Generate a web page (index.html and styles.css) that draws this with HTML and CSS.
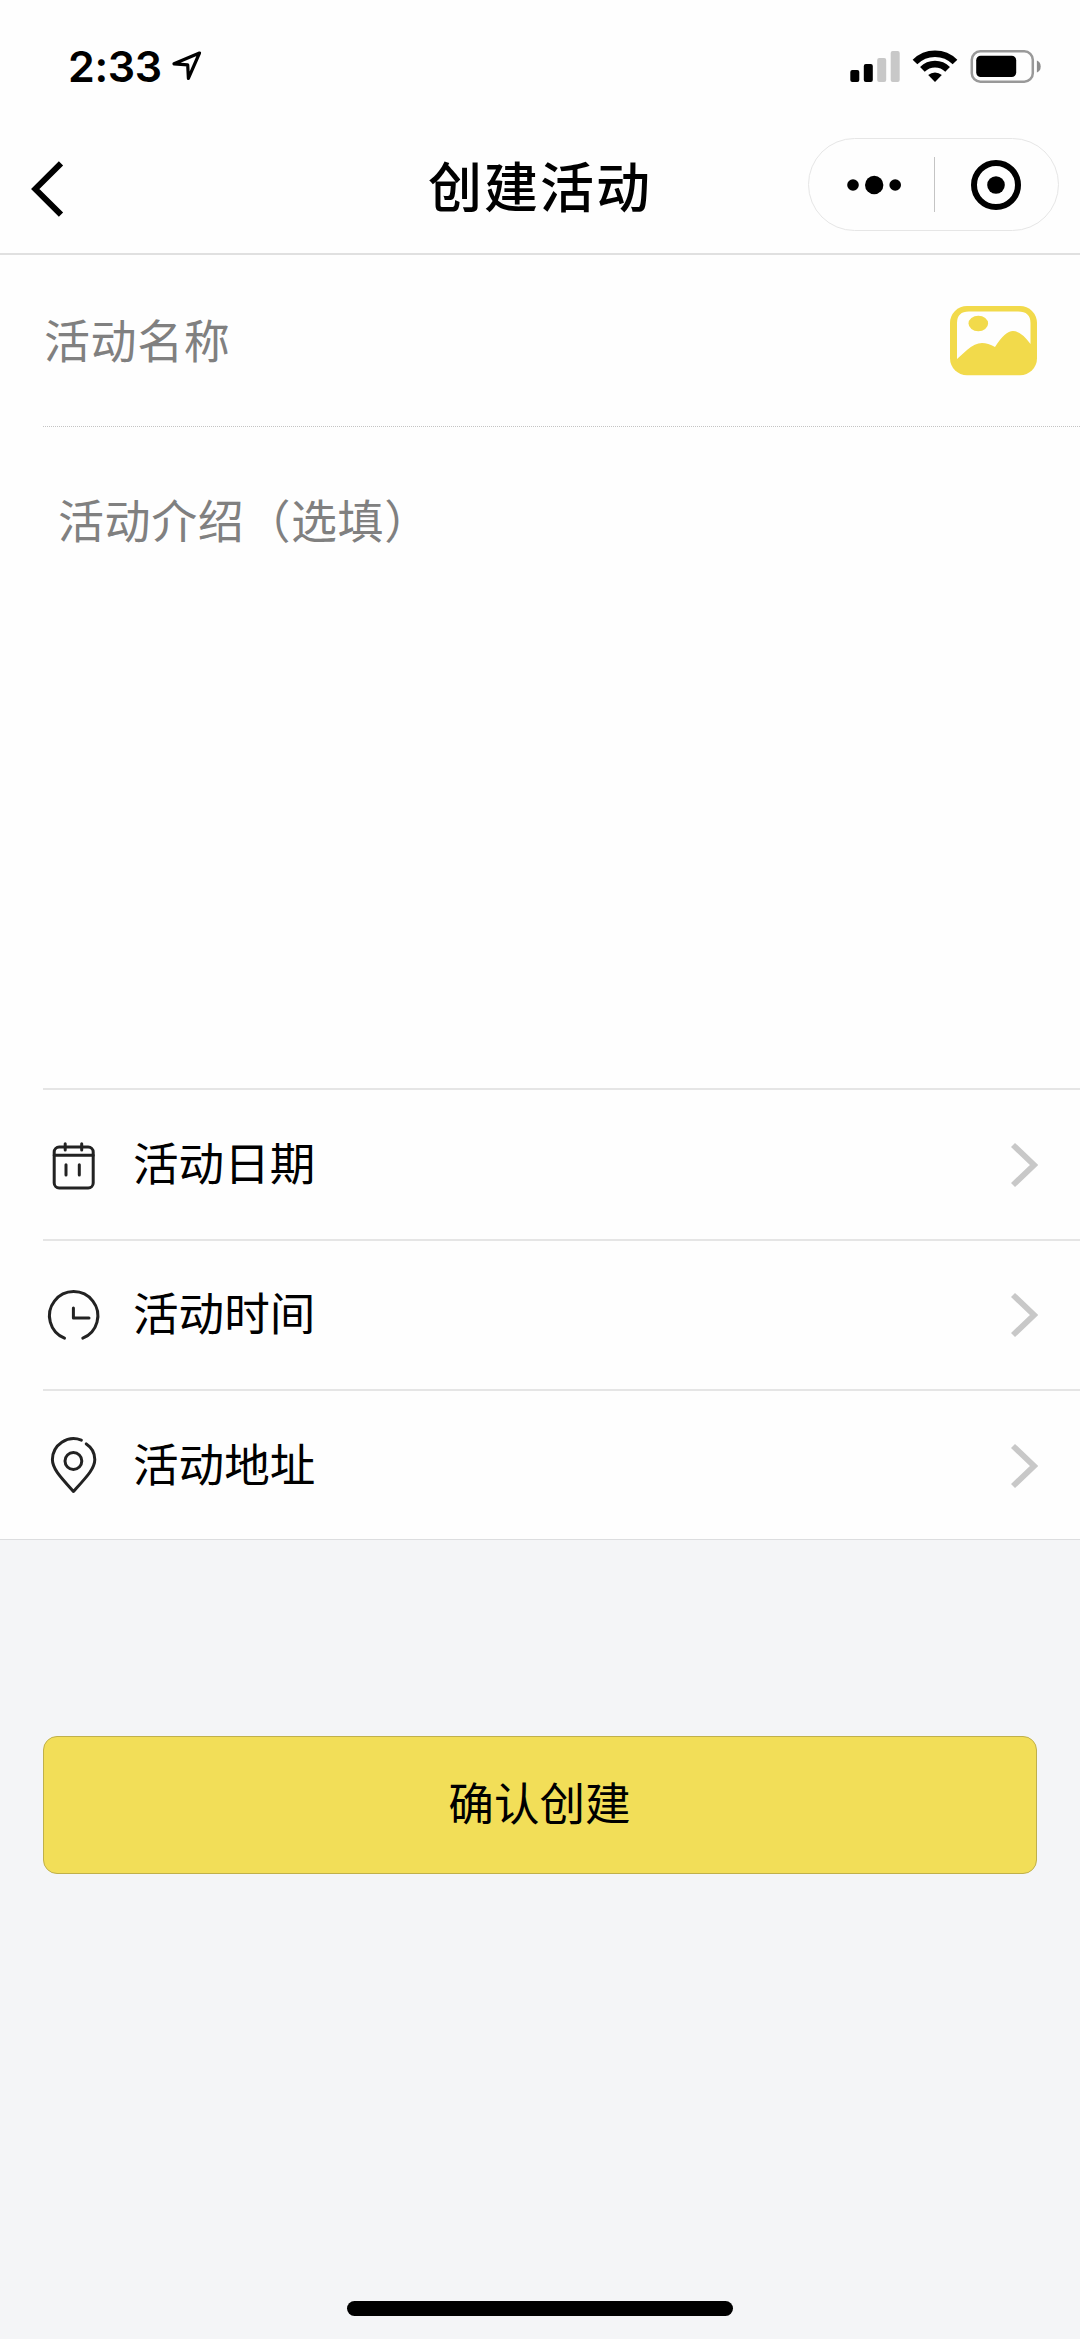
FILE: index.html
```
<!DOCTYPE html>
<html lang="zh-CN">
<head>
  <meta charset="UTF-8"/>
  <meta name="viewport" content="width=device-width, initial-scale=1.0"/>
  <title>创建活动</title>
  <link rel="stylesheet" href="styles.css">
</head>
<body>

<header class="header">
  <div class="status-bar">
    <div class="clock">
      <span class="time">2:33</span>
      <svg class="location" width="34" height="34" viewBox="0 0 34 34">
        <path d="M29.5 4 L4 14.8 L17.7 15.8 L18.4 29.3 Z" fill="none" stroke="#000" stroke-width="3.2" stroke-linejoin="round"/>
      </svg>
    </div>
    <div class="indicators">
      <svg width="50" height="34" viewBox="0 0 50 34">
        <rect x="0.3" y="21" width="9" height="12" rx="2"/>
        <rect x="13.8" y="15" width="9" height="18" rx="2"/>
        <rect x="27.2" y="9" width="9" height="24" rx="2" fill="#c8c8c8"/>
        <rect x="40.7" y="2" width="9" height="31" rx="2" fill="#c8c8c8"/>
      </svg>
      <svg width="46" height="34" viewBox="0 0 46 34">
        <path d="M3 13 A28.3 28.3 0 0 1 43 13" fill="none" stroke="#000" stroke-width="6.6"/>
        <path d="M10.4 20.4 A17.8 17.8 0 0 1 35.6 20.4" fill="none" stroke="#000" stroke-width="6.6"/>
        <path d="M23 33 L16.2 26 A10.5 10.5 0 0 1 29.8 26 Z"/>
      </svg>
      <svg width="71" height="34" viewBox="0 0 71 34">
        <rect x="1.8" y="2.3" width="61" height="30.4" rx="8.5" fill="none" stroke="#999" stroke-width="2.5"/>
        <rect x="6.2" y="6.7" width="40" height="21.3" rx="4.5"/>
        <path d="M66.9 11.5 Q70.7 13 70.7 17.5 T66.9 23.5 Z" fill="#8c8c8c"/>
      </svg>
    </div>
  </div>

  <div class="nav">
    <svg class="back" width="34" height="58" viewBox="0 0 34 58">
      <path d="M31 3.3 L5.3 29 L31 54.7" fill="none" stroke="#000" stroke-width="6"/>
    </svg>
    <h1>创建活动</h1>
    <div class="capsule">
      <svg class="more" width="54" height="20" viewBox="0 0 54 20">
        <circle cx="6" cy="10" r="5.8"/>
        <circle cx="27.2" cy="10" r="9.2"/>
        <circle cx="48.2" cy="10" r="5.8"/>
      </svg>
      <span class="divider"></span>
      <svg class="target" width="50" height="50" viewBox="0 0 50 50">
        <circle cx="25" cy="25" r="22" fill="none" stroke="#000" stroke-width="6"/>
        <circle cx="25" cy="25" r="8.8"/>
      </svg>
    </div>
  </div>
</header>

<main class="form">
  <div class="field name">
    <span class="placeholder">活动名称</span>
    <svg width="87" height="70" viewBox="0 0 87 70">
      <rect width="87" height="69.3" rx="17" fill="#f2da4b"/>
      <path d="M7 53 V17 Q7 5.5 19 5.5 H68 Q80.5 5.5 80.5 17 V38 Q71 25 63 25 Q55 25 45 41 Q38 37 32 37 Q25 37 17 44 Z" fill="#fefefe"/>
      <ellipse cx="28.3" cy="17.5" rx="9.8" ry="7.8" fill="#f2da4b"/>
    </svg>
  </div>
  <div class="field intro">
    <span class="placeholder">活动介绍（选填）</span>
  </div>

  <div class="field cell date">
    <svg class="icon" width="60" height="60" viewBox="0 0 60 60">
      <rect x="11.2" y="12" width="39" height="41" rx="5"/>
      <path d="M11.2 20.3 H50.2 M22.2 8.8 V15 M38.7 8.8 V15 M23 29.8 V40 M36.3 29.8 V40"/>
    </svg>
    <span class="label">活动日期</span>
    <svg class="arrow" width="28" height="46" viewBox="0 0 28 46"><path d="M3 3 L24 23 L3 43"/></svg>
  </div>
  <div class="field cell">
    <svg class="icon" width="60" height="60" viewBox="0 0 60 60">
      <path d="M21.5 53.2 A24.2 24.2 0 1 1 39.8 53.2 M30.4 23 V33 H46"/>
    </svg>
    <span class="label">活动时间</span>
    <svg class="arrow" width="28" height="46" viewBox="0 0 28 46"><path d="M3 3 L24 23 L3 43"/></svg>
  </div>
  <div class="field cell">
    <svg class="icon" width="60" height="60" viewBox="0 0 60 60">
      <path d="M38.3 4.1 A21.3 21.3 0 0 0 9.4 23.5 C9.4 32.5 17 40.5 30.5 55.5 C44 40.5 51.8 32.5 51.8 23.5 Q51.8 13.5 43.3 7.9"/>
      <circle cx="30.4" cy="25" r="8.4"/>
    </svg>
    <span class="label">活动地址</span>
    <svg class="arrow" width="28" height="46" viewBox="0 0 28 46"><path d="M3 3 L24 23 L3 43"/></svg>
  </div>
</main>

<footer class="footer">
  <button class="submit">确认创建</button>
  <div class="home-bar"></div>
</footer>

</body>
</html>
```
FILE: styles.css
```
* {
  box-sizing: border-box;
}
body {
  margin: 0;
  width: 1080px;
  height: 2339px;
  display: flex;
  flex-direction: column;
  overflow: hidden;
  font-family: 'Noto Sans CJK SC', sans-serif;
  background: #f4f5f7;
  color: #000;
}
svg {
  display: block;
  flex: none;
}

/* status bar + navigation */
.header {
  height: 255px;
  background: #fefefe;
  border-bottom: 2px solid #e0e0e0;
}
.status-bar {
  height: 115px;
  padding: 49px 39px 0 68px;
  display: flex;
  justify-content: space-between;
  align-items: flex-start;
}
.clock {
  display: flex;
  gap: 8px;
}
.time {
  width: 94px;
  font-family: Inter, sans-serif;
  font-size: 43px;
  font-weight: 600;
  line-height: 34px;
  letter-spacing: -0.4px;
  white-space: nowrap;
}
.indicators {
  display: flex;
  gap: 12px;
}
.nav {
  height: 139px;
  padding: 0 21px 0 30px;
  display: grid;
  grid-template-columns: 251px 1fr 251px;
  align-items: center;
}
.back {
  margin-top: 9px;
}
.nav h1 {
  margin: 0;
  padding: 1px 9px 0 0;
  font-size: 54px;
  font-weight: 500;
  line-height: 80px;
  letter-spacing: 2px;
  text-align: center;
}
.capsule {
  height: 93px;
  padding: 0 37px 0 38px;
  display: flex;
  align-items: center;
  justify-content: space-between;
  border: 1px solid #e6e6e6;
  border-radius: 47px;
}
.divider {
  width: 1px;
  height: 55px;
  margin-left: 16px;
  margin-right: 20px;
  background: #c4c4c4;
}

/* form */
.form {
  height: 1285px;
  padding-left: 43px;
  background: #fefefe;
  border-bottom: 1px solid #dcdddf;
}
.field {
  display: flex;
  align-items: center;
  font-size: 46px;
  line-height: 64px;
}
.placeholder {
  color: #808080;
  letter-spacing: 0.6px;
}
.name {
  height: 172px;
  padding-right: 43px;
  justify-content: space-between;
  border-bottom: 1px dotted #c4c4c4;
}
.name .placeholder {
  padding: 0 0 6px 1px;
}
.intro {
  height: 663px;
  padding: 59px 0 0 15px;
  align-items: flex-start;
  border-bottom: 2px solid #e5e5e5;
}
.cell {
  height: 150px;
  padding-right: 42px;
  border-bottom: 2px solid #e5e5e5;
}
.cell.date {
  height: 151px;
}
.cell:last-child {
  border-bottom: none;
}
.label {
  flex: 1;
  margin-left: 30px;
  padding-bottom: 8px;
  font-size: 45.6px;
}
.icon {
  fill: none;
  stroke: #222;
  stroke-width: 3;
  stroke-linecap: round;
  stroke-linejoin: round;
}
.arrow {
  fill: none;
  stroke: #c8c8c8;
  stroke-width: 5.8;
}

/* bottom area */
.footer {
  flex: 1;
  padding: 196px 43px 23px;
  display: flex;
  flex-direction: column;
  justify-content: space-between;
}
.submit {
  height: 138px;
  padding: 0 1px 8px 0;
  font-family: inherit;
  font-size: 45.6px;
  color: #000;
  background: #f2de58;
  border: 1px solid #c0b04a;
  border-radius: 14px;
}
.home-bar {
  width: 386px;
  height: 15px;
  margin-left: 304px;
  background: #000;
  border-radius: 8px;
}
```
